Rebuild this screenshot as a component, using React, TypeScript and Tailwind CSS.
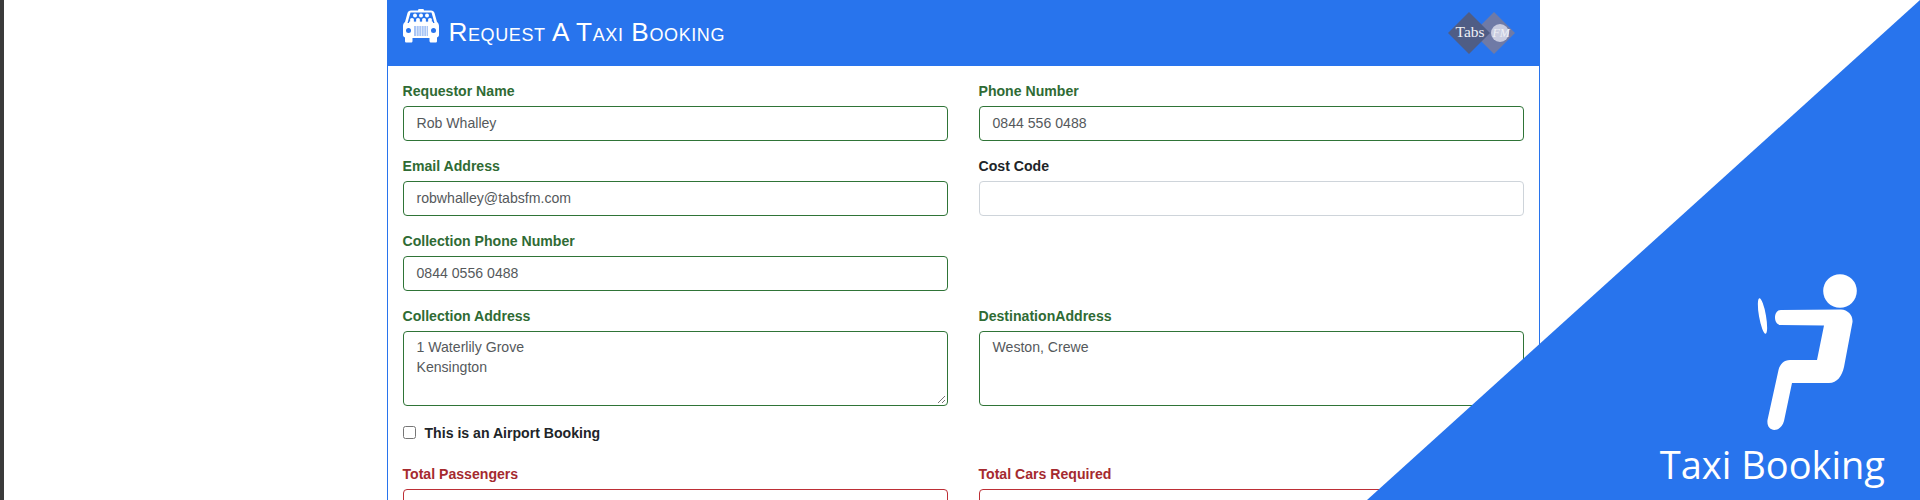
import React from 'react';

const sans = "font-['Liberation_Sans',Arial,sans-serif]";

type Tone = 'valid' | 'invalid' | 'plain';

const labelTone: Record<Tone, string> = {
  valid: 'text-[#2f6b34]',
  invalid: 'text-[#a52a2f]',
  plain: 'text-[#212529]',
};

const inputTone: Record<Tone, string> = {
  valid: 'border-[#2f7437]',
  invalid: 'border-[#bd2f36]',
  plain: 'border-[#ced4da]',
};

function Field({ label, value, tone }: { label: string; value?: string; tone: Tone }) {
  return (
    <div className="min-w-0">
      <div className={`h-[28px] pt-[3px] text-[14.1px] leading-[20px] font-bold ${labelTone[tone]}`}>{label}</div>
      <div className={`h-[35px] rounded-[4px] border bg-white px-[13px] pt-[6px] text-[14.1px] leading-[21px] text-[#55595c] ${inputTone[tone]}`}>
        {value}
      </div>
    </div>
  );
}

function AreaField({ label, lines, resize }: { label: string; lines: string[]; resize?: boolean }) {
  return (
    <div className="relative min-w-0">
      <div className="h-[28px] pt-[3px] text-[14.1px] leading-[20px] font-bold text-[#2f6b34]">{label}</div>
      <div className="h-[75px] rounded-[4px] border border-[#2f7437] bg-white px-[13px] pt-[5px] text-[14.1px] leading-[20px] text-[#55595c]">
        {lines.map((l) => (
          <div key={l}>{l}</div>
        ))}
      </div>
      {resize && (
        <svg className="absolute right-[2px] bottom-[2px]" width="9" height="9" viewBox="0 0 9 9">
          <path d="M1 8 L8 1 M5 8 L8 5" stroke="#777" strokeWidth="1" />
        </svg>
      )}
    </div>
  );
}

function TaxiIcon() {
  return (
    <svg width="36" height="34" viewBox="0 0 36 34">
      <path d="M15.500 0h5l.5 1.500h7c1.800 0 3 .9 3.500 2.500l2.500 9c1.300 1 2 2.500 2 4v9c0 1.300-.7 2-2 2.500V32c0 1-.6 1.500-1.500 1.500H28c-1 0-1.500-.6-1.500-1.500v-3h-17v3c0 1-.6 1.500-1.500 1.500H3.500C2.600 33.500 2 33 2 32v-3.500C.7 28 0 27.300 0 26v-9c0-1.500 .7-3 2-4l2.500-9C5 2.400 6.200 1.500 8 1.500h7z" fill="#fff" />
      <path d="M7.500 3.500h21l3 10.500H4.500z" fill="#2874ed" />
      <g fill="#fff">
        <circle cx="12" cy="6.500" r="2" />
        <circle cx="18" cy="6.500" r="2" />
        <circle cx="24" cy="6.500" r="2" />
        <circle cx="9" cy="11" r="2" />
        <circle cx="15" cy="11" r="2" />
        <circle cx="21" cy="11" r="2" />
        <circle cx="27" cy="11" r="2" />
        <path d="M6 15v-1.500c0-1 1-1.500 3-1.500s3 .5 3 1.500c0-1 1-1.500 3-1.500s3 .5 3 1.500c0-1 1-1.500 3-1.500s3 .5 3 1.500c0-1 1-1.500 3-1.500s3 .5 3 1.500V15z" />
      </g>
      <circle cx="5.500" cy="21.500" r="2.500" fill="#2874ed" />
      <circle cx="30.500" cy="21.500" r="2.500" fill="#2874ed" />
      <rect x="11" y="17" width="14" height="10" fill="#a9c5f5" />
      <path d="M13.500 17v10M16 17v10M18.500 17v10M21 17v10M23.500 17v10" stroke="#fff" strokeWidth="0.600" />
    </svg>
  );
}

function TabsLogo() {
  return (
    <div className="relative h-[42px] w-[67px]">
      <svg className="absolute inset-0" width="67" height="42" viewBox="0 0 67 42">
        <path d="M46 0 L67 21 L46 42 L25 21 Z" fill="#6f7aa6" />
        <path d="M21 0 L42 21 L21 42 L0 21 Z" fill="#4f5d85" />
        <circle cx="52" cy="21" r="9" fill="#c9cce0" />
      </svg>
      <span className="absolute top-[10px] left-[8px] font-['Liberation_Serif',serif] text-[15.5px] leading-[20px] text-[#eef0f6]">Tabs</span>
      <span className="absolute top-[14px] left-[45px] font-['Liberation_Serif',serif] text-[12px] leading-[14px] text-[#eef0f6] italic">FM</span>
    </div>
  );
}

function PromoCorner() {
  return (
    <div className="absolute top-0 right-0 h-[500px] w-[553px] bg-[#2874ed] [clip-path:polygon(100%_0,100%_100%,0_100%)]">
      <svg className="absolute top-[240px] right-0" width="280" height="260" viewBox="0 0 280 260">
        <circle cx="200" cy="51" r="16.800" fill="#fff" />
        <ellipse cx="122.500" cy="76" rx="3.500" ry="18" transform="rotate(-10 122.500 76)" fill="#fff" />
        <path
          d="M141 70 L201 69.500 C208 70 213 75 212.500 82 L204 127 C202 136 197 143 189 143 L152 143 L144 181 C141 193 126 193 127.500 180 L138.500 130 C140 124 144 120 150 120 L177 120 L184 85.500 L141 85 C133 85 133 70 141 70 Z"
          fill="#fff"
        />
      </svg>
      <div className="absolute right-[35px] bottom-[11px] font-['Open_Sans',sans-serif] text-[38px] leading-[50px] font-normal whitespace-nowrap text-white">
        Taxi Booking
      </div>
    </div>
  );
}

export default function App() {
  return (
    <div className={`relative h-[500px] w-[1920px] overflow-hidden bg-white ${sans}`}>
      <div className="absolute top-0 bottom-0 left-0 w-[4px] bg-[#3a3a3a]" />

      <div className="mx-auto h-[500px] w-[1153px] -translate-x-[-3px] border-x border-[#2874ed]">
        <div className="flex h-[66px] items-center justify-between bg-[#2874ed] pr-[24px] pl-[15px]">
          <div className="flex items-center gap-[10px]">
            <div className="-mt-[7px] -translate-y-[4px]"><TaxiIcon /></div>
            <h1 className="pb-[2px] text-[26.2px] leading-[32px] font-normal tracking-[0.6px] text-white [font-variant:small-caps]">
              Request A Taxi Booking
            </h1>
          </div>
          <TabsLogo />
        </div>

        <div className="pt-[12px] pr-[15px] pl-[15px]">
          <div className="grid grid-cols-2 gap-x-[31px] gap-y-[12px]">
            <Field label="Requestor Name" value="Rob Whalley" tone="valid" />
            <Field label="Phone Number" value="0844 556 0488" tone="valid" />
            <Field label="Email Address" value="robwhalley@tabsfm.com" tone="valid" />
            <Field label="Cost Code" tone="plain" />
            <Field label="Collection Phone Number" value="0844 0556 0488" tone="valid" />
            <div />
            <AreaField label="Collection Address" lines={['1 Waterlily Grove', 'Kensington']} resize />
            <AreaField label="DestinationAddress" lines={['Weston, Crewe']} resize />
          </div>
          <div className="mt-[17px] flex h-[20px] items-center gap-[9px] text-[14.1px] font-bold text-[#212529]">
            <span className="mb-[2px] h-[13px] w-[13px] rounded-[2.500px] border border-[#767676] bg-white" />
            <span className="mt-[2px]">This is an Airport Booking</span>
          </div>
          <div className="mt-[18px] grid grid-cols-2 gap-x-[31px]">
            <Field label="Total Passengers" tone="invalid" />
            <Field label="Total Cars Required" tone="invalid" />
          </div>
        </div>
      </div>

      <PromoCorner />
    </div>
  );
}
